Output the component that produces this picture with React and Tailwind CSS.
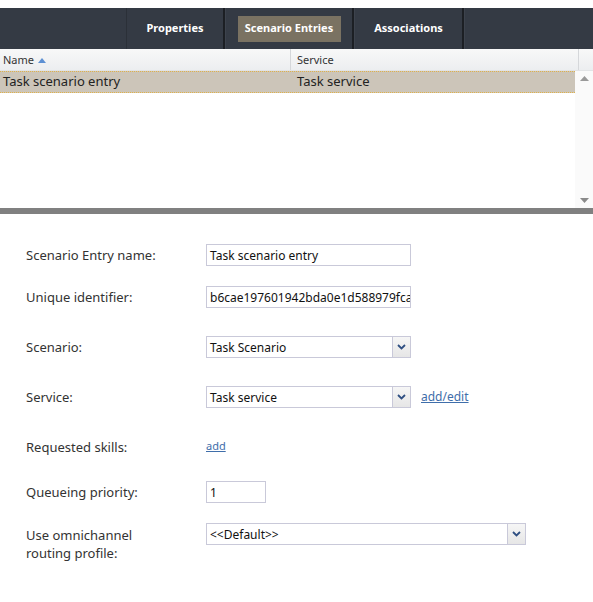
const Chevron = () => (
  <svg width="9" height="6" viewBox="0 0 9 6">
    <path d="M1 1 L4.5 4.5 L8 1" fill="none" stroke="#2f4f82" strokeWidth="1.8" />
  </svg>
);

const Select = ({ value, width }) => (
  <div
    className={`flex h-[22px] border border-[#c9c9d9] bg-white ${width}`}
  >
    <div className="flex-1 px-[3px] pt-px leading-[20px] text-[12px] text-[#111] whitespace-nowrap overflow-hidden">
      {value}
    </div>
    <div className="w-[18px] flex items-center justify-center border-l border-[#c9c9d9] bg-gradient-to-b from-[#f6f6f6] to-[#e6e6e6]">
      <Chevron />
    </div>
  </div>
);

const TextBox = ({ value, width }) => (
  <div
    className={`h-[22px] border border-[#c9c9d9] bg-white px-[3px] pt-px leading-[20px] text-[12px] text-[#111] whitespace-nowrap overflow-hidden ${width}`}
  >
    {value}
  </div>
);

const Separator = () => (
  <div className="flex h-full">
    <div className="w-[2px] h-full bg-[#1c1f24]" />
    <div className="w-px h-full bg-[#3d434d]" />
  </div>
);

export default function App() {
  return (
    <div className="w-[593px] h-[602px] bg-white font-['Noto_Sans','Open_Sans',sans-serif] overflow-hidden">
      <div className="h-2 bg-white" />

      {/* tab bar */}
      <div className="h-[41px] bg-[#343a44] flex items-center">
        <div className="w-[126px] h-full" />
        <div className="w-px h-full bg-[#2b3038]" />
        <div className="w-[96px] h-full flex items-center justify-center text-[11px] font-bold text-white">
          Properties
        </div>
        <Separator />
        <div className="w-[126px] h-full flex items-center justify-center">
          <div className="h-[26px] w-[103px] bg-[#7a7262] flex items-center justify-center text-[11px] font-bold text-white">
            Scenario Entries
          </div>
        </div>
        <Separator />
        <div className="w-[107px] h-full flex items-center justify-center text-[11px] font-bold text-white">
          Associations
        </div>
        <Separator />
      </div>

      {/* grid */}
      <div className="h-[22px] flex bg-gradient-to-b from-[#f8f8f8] to-[#eceef0] border-b border-[#e2e4e6] text-[11px] text-[#333]">
        <div className="w-[291px] flex items-center gap-1 pl-[3px] pt-px border-r border-[#d5d7da]">
          Name
          <svg width="8" height="5" viewBox="0 0 8 5">
            <path d="M0 5 L4 0 L8 5 Z" fill="#5d90d3" />
          </svg>
        </div>
        <div className="w-[288px] flex items-center pl-[6px] pt-px border-r border-[#d5d7da]">
          Service
        </div>
        <div className="flex-1" />
      </div>
      <div className="h-[137px] flex">
        <div className="flex-1">
          <div className="h-[22px] flex items-center bg-[#ccc5b9] border-y border-dotted border-[#e0b24a] text-[13px] text-[#222]">
            <div className="w-[297px] pl-[3px]">Task scenario entry</div>
            <div>Task service</div>
          </div>
        </div>
        <div className="w-[18px] bg-[#fafafa] flex flex-col items-center justify-between py-[5px]">
          <svg width="9" height="5" viewBox="0 0 9 5">
            <path d="M0 5 L4.5 0 L9 5 Z" fill="#9a9a9a" />
          </svg>
          <svg width="9" height="5" viewBox="0 0 9 5">
            <path d="M0 0 L4.5 5 L9 0 Z" fill="#8a8a8a" />
          </svg>
        </div>
      </div>
      <div className="h-[6px] bg-[#808080]" />

      {/* form */}
      <div className="pt-[30px] text-[13px] text-[#333]">
        <div className="flex items-center h-[22px]">
          <div className="w-[206px] pl-[26px] pt-[2px]">Scenario Entry name:</div>
          <TextBox value="Task scenario entry" width="w-[205px]" />
        </div>
        <div className="flex items-center h-[22px] mt-[20px]">
          <div className="w-[206px] pl-[26px] pt-[2px]">Unique identifier:</div>
          <TextBox value="b6cae197601942bda0e1d588979fca42" width="w-[205px]" />
        </div>
        <div className="flex items-center h-[22px] mt-[28px]">
          <div className="w-[206px] pl-[26px] pt-[2px]">Scenario:</div>
          <Select value="Task Scenario" width="w-[205px]" />
        </div>
        <div className="flex items-center h-[22px] mt-[28px]">
          <div className="w-[206px] pl-[26px] pt-[2px]">Service:</div>
          <Select value="Task service" width="w-[205px]" />
          <a href="#" className="ml-[10px] text-[12px] text-[#3f6eaa] underline">
            add/edit
          </a>
        </div>
        <div className="flex items-center h-[22px] mt-[28px]">
          <div className="w-[206px] pl-[26px] pt-[2px]">Requested skills:</div>
          <a href="#" className="text-[11px] text-[#3f6eaa] underline -mt-[2px]">
            add
          </a>
        </div>
        <div className="flex items-center h-[22px] mt-[23px]">
          <div className="w-[206px] pl-[26px] pt-[2px]">Queueing priority:</div>
          <TextBox value="1" width="w-[60px]" />
        </div>
        <div className="flex items-start mt-[20px]">
          <div className="w-[206px] pl-[26px] pt-[3px] leading-[18px]">
            Use omnichannel
            <br />
            routing profile:
          </div>
          <Select value="<<Default>>" width="w-[320px]" />
        </div>
      </div>
    </div>
  );
}
